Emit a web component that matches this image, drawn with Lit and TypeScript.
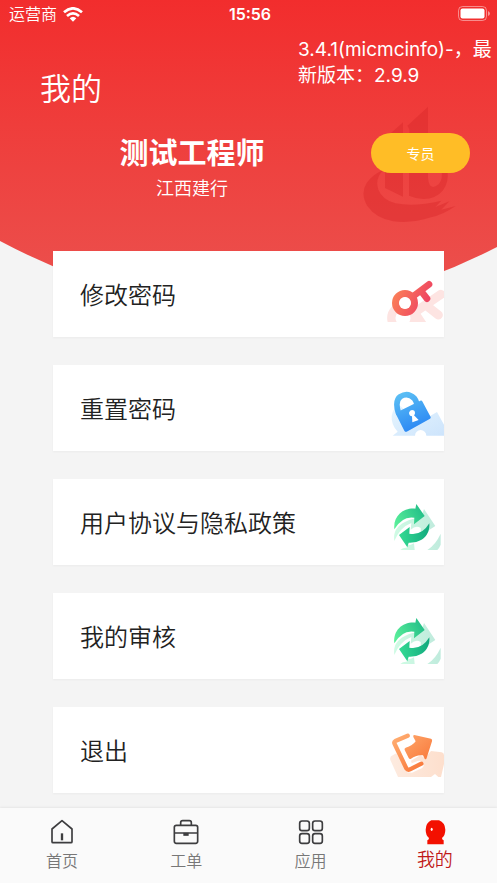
import { LitElement, html, css, svg, type TemplateResult } from "lit";
import { customElement, property, state } from "lit/decorators.js";
import { classMap } from "lit/directives/class-map.js";

const keyIcon = html`<svg viewBox="27 33 180 144" aria-hidden="true">
  <defs>
    <linearGradient id="kr" gradientUnits="userSpaceOnUse" x1="55" y1="85" x2="150" y2="130">
      <stop offset="0" stop-color="#fb8058" /><stop offset="1" stop-color="#ee4462" />
    </linearGradient>
    <clipPath id="kc"><rect x="27" y="33" width="180" height="138" /></clipPath>
  </defs>
  <g clip-path="url(#kc)" fill="none" stroke="#fde4e2">
    <circle cx="84" cy="159" r="35" stroke-width="25" />
    <path d="M128 136L198 88M152 120L190 150" stroke-width="27" stroke-linecap="round" />
    <path d="M122 142L146 178" stroke-width="20" />
  </g>
  <g fill="none" stroke="url(#kr)">
    <circle cx="90" cy="114" r="28" stroke-width="22" />
    <path d="M114 94L162 58M138 78L156 101" stroke-width="20" stroke-linecap="round" stroke-linejoin="round" />
  </g>
  <circle cx="90" cy="114" r="18" fill="#fff" />
</svg>`;

const lockIcon = html`<svg viewBox="27 30 180 144" aria-hidden="true">
  <defs>
    <linearGradient id="l" gradientUnits="userSpaceOnUse" x1="80" y1="35" x2="125" y2="150">
      <stop offset="0" stop-color="#5cc0f4" /><stop offset="1" stop-color="#2b87f4" />
    </linearGradient>
    <linearGradient id="ll" x1="0" y1="0" x2="1" y2="1">
      <stop offset="0" stop-color="#e6f5fe" /><stop offset="1" stop-color="#cde4fc" />
    </linearGradient>
  </defs>
  <path d="M53 167L68 155Q48 134 50 108Q53 84 76 78L130 128L186 96L207 134V167H154A17 17 0 0 0 120 167Z" fill="url(#ll)" />
  <path d="M70 98Q59 62 76 50Q98 36 118 55Q123 61 126 72" fill="none" stroke="url(#l)" stroke-width="17" stroke-linecap="round" />
  <path d="M66 97L136 62Q141 61 143 66L167 111Q168 114 165 116L95 155Q91 157 88 152L63 103Q62 99 66 97Z" fill="url(#l)" />
  <path d="M102 98Q104 90 111 90Q120 90 120 99Q120 103 117 106L131 120L112 127L111 109Q102 107 102 98Z" fill="#fff" />
</svg>`;

const cycleIcon = html`<svg viewBox="27 36 180 144" aria-hidden="true">
  <defs>
    <linearGradient id="c1" gradientUnits="userSpaceOnUse" x1="58" y1="100" x2="148" y2="55">
      <stop offset="0" stop-color="#5cf09b" /><stop offset="1" stop-color="#21bd87" />
    </linearGradient>
    <linearGradient id="c2" gradientUnits="userSpaceOnUse" x1="72" y1="125" x2="163" y2="115">
      <stop offset="0" stop-color="#35da93" /><stop offset="1" stop-color="#12aa7e" />
    </linearGradient>
    <linearGradient id="c3" x1="0" y1="0" x2="1" y2="0">
      <stop offset="0" stop-color="#cffbe4" /><stop offset="1" stop-color="#c0ebdd" />
    </linearGradient>
  </defs>
  <path d="M58 147Q52 108 90 90Q111 78 138 77L147 51L181 102L138 130L137 108Q123 99 107 113L109 93Q76 105 58 147Z" fill="url(#c3)" />
  <path d="M76 174Q84 166 95 167L97 160Q108 160 117 154L119 174ZM197 125V158Q193 168 187 174H157Q182 158 197 125Z" fill="url(#c3)" />
  <path d="M58 112C54 72 84 47 121 50L124 36L149 72L117 97L118 77Q82 71 58 112Z" fill="url(#c1)" />
  <path d="M163 94C166 132 138 154 101 152L97 166L72 129L104 105L103 125Q140 132 163 94Z" fill="url(#c2)" />
</svg>`;

const exitIcon = html`<svg viewBox="27 36 180 144" aria-hidden="true">
  <defs>
    <linearGradient id="e" gradientUnits="userSpaceOnUse" x1="60" y1="45" x2="145" y2="145">
      <stop offset="0" stop-color="#ffae72" /><stop offset="1" stop-color="#f9783a" />
    </linearGradient>
    <linearGradient id="el" x1="0" y1="0" x2="1" y2="0">
      <stop offset="0" stop-color="#fdebe0" /><stop offset="1" stop-color="#fddfcd" />
    </linearGradient>
  </defs>
  <path d="M69 171L46 120Q43 110 53 106L64 100L96 157L111 158L140 145Q150 139 143 128Q139 120 128 123L110 130L108 122L136 106L150 114L168 93L200 97Q207 99 207 105V132L198 171H190L180 162L168 171Z" fill="url(#el)" />
  <path d="M98 47L61 63Q56 66 59 72L94 145Q98 151 105 148L139 131" fill="none" stroke="url(#e)" stroke-width="13" stroke-linecap="round" stroke-linejoin="round" />
  <path d="M118 45L168 56Q173 58 171 64L155 114Q153 120 149 116L144 106Q125 103 108 116Q104 119 101 114L89 90Q87 85 92 83Q113 77 122 64L115 51Q113 45 118 45Z" fill="url(#e)" />
</svg>`;

const homeIcon = svg`<g fill="none" stroke="#3d3d3f" stroke-width="5" stroke-linejoin="round">
  <path d="M9 30L39 5L69 30V68Q69 71 66 71H12Q9 71 9 68Z" /><path d="M39 43V64" stroke-width="7" /></g>`;
const caseIcon = svg`<g fill="none" stroke="#3d3d3f" stroke-width="5" stroke-linejoin="round">
  <rect x="4" y="19" width="70" height="54" rx="6" /><path d="M23 18V11Q23 5 29 5H49Q55 5 55 11V18M4 42H74" />
  <path d="M31 46H47" stroke-width="9" /></g>`;
const gridIcon = svg`<g fill="none" stroke="#3d3d3f" stroke-width="5">
  <rect x="5" y="6" width="29" height="29" rx="7" /><rect x="44" y="6" width="29" height="29" rx="7" />
  <rect x="5" y="44" width="29" height="29" rx="7" /><rect x="44" y="44" width="29" height="29" rx="7" /></g>`;
const meIcon = svg`<path d="M28 4H51Q69 11 70 32Q70 49 60 57Q60 62 65 64V76H16V64Q21 62 21 57Q11 49 11 32Q12 11 28 4Z" fill="#f31000" />
  <ellipse cx="29" cy="31" rx="3" ry="5" fill="#fff" />`;

@customElement("menu-card")
class MenuCard extends LitElement {
  @property() label = "";
  @property({ attribute: false }) icon?: TemplateResult;

  static styles = css`
    :host { display: block; }
    button {
      display: flex; align-items: center; justify-content: space-between;
      width: 100%; height: 86px; margin: 0; padding: 4px 0 0 27px; border: 0;
      background: #fff; box-shadow: 0 1px 2px rgba(0, 0, 0, 0.04);
      font: inherit; font-size: 24px; line-height: 36px; color: #222;
      text-align: left; cursor: pointer;
    }
    svg { display: block; width: 60px; height: 48px; margin-top: 8px; }
  `;

  render() {
    return html`<button type="button"><span>${this.label}</span>${this.icon}</button>`;
  }
}

@customElement("app-root")
class AppRoot extends LitElement {
  @state() private current = "me";

  private items = [
    { label: "修改密码", icon: keyIcon },
    { label: "重置密码", icon: lockIcon },
    { label: "用户协议与隐私政策", icon: cycleIcon },
    { label: "我的审核", icon: cycleIcon },
    { label: "退出", icon: exitIcon },
  ];

  private tabs = [
    { id: "home", label: "首页", icon: homeIcon },
    { id: "work", label: "工单", icon: caseIcon },
    { id: "apps", label: "应用", icon: gridIcon },
    { id: "me", label: "我的", icon: meIcon },
  ];

  static styles = css`
    :host {
      display: flex; flex-direction: column; min-height: 100vh; position: relative;
      background: #f4f4f4; color: #fff;
      font-family: Inter, "Noto Sans CJK SC", sans-serif; font-weight: 350;
    }
    * { box-sizing: border-box; }
    .backdrop { position: absolute; top: 0; left: 0; width: 100%; height: 312px; }
    .emblem { position: absolute; top: 105px; right: 40px; width: 94px; height: 118px; }
    header { position: relative; height: 251px; }
    .status {
      display: grid; grid-template-columns: 1fr auto 1fr; align-items: center;
      height: 28px; padding: 0 6px 0 9px; font-size: 16px; line-height: 24px;
    }
    .carrier { display: flex; align-items: center; gap: 6px; }
    .wifi { width: 20px; height: 15px; }
    .time { font-weight: 600; }
    .battery { width: 33px; height: 16px; justify-self: end; }
    .top { display: flex; justify-content: space-between; padding: 9px 0 0 40px; }
    h1 { margin: 28px 0 0; font-size: 31px; line-height: 48px; font-weight: 350; }
    .version { width: 199px; margin: 0; font-size: 19px; line-height: 26px; font-weight: 400; }
    .profile { display: flex; align-items: flex-start; padding: 20px 27px 0 13px; }
    .identity { flex: 1; padding-top: 1px; text-align: center; }
    h2 { margin: 0; font-size: 29px; line-height: 40px; font-weight: 700; }
    .branch { margin: 0; font-size: 18px; line-height: 29px; }
    .role {
      width: 99px; height: 40px; padding: 0; border: 0; border-radius: 20px;
      background: #ffbd26; color: #fff; font: inherit; font-size: 14px; font-weight: 400;
    }
    main {
      position: relative; flex: 1; display: flex; flex-direction: column; gap: 28px;
      padding: 0 53px 15px;
    }
    nav {
      position: relative; display: grid; grid-template-columns: repeat(4, 1fr); height: 75px;
      background: #fafafa; box-shadow: 0 -1px 2px rgba(0, 0, 0, 0.06);
    }
    nav a {
      display: flex; flex-direction: column; align-items: center; padding-top: 11px; gap: 4px;
      color: #777; font-size: 16px; line-height: 24px; text-decoration: none;
    }
    nav a.active { color: #c01818; font-size: 18px; line-height: 22px; }
    nav svg { width: 26px; height: 26px; }
  `;

  render() {
    return html`
      <svg class="backdrop" viewBox="0 0 497 312" preserveAspectRatio="none" aria-hidden="true">
        <defs>
          <linearGradient id="bg" x1="0" y1="0" x2="0" y2="1">
            <stop offset="0" stop-color="#f22d2d" /><stop offset="0.4" stop-color="#ef3d3b" />
            <stop offset="0.85" stop-color="#ec4d4a" /><stop offset="1" stop-color="#ec4f4c" />
          </linearGradient>
        </defs>
        <path d="M0 0H497V247Q250 374 0 241Z" fill="url(#bg)" />
      </svg>
      <svg class="emblem" viewBox="69 30 282 354" aria-hidden="true">
        <g fill="#d9272b" fill-opacity="0.45">
          <path d="M264 35V250Q268 290 296 268Q310 252 304 225H322Q328 262 308 287Q288 311 250 312Q228 311 207 302V118Q212 106 202 92Z" />
          <path d="M189 82V305L135 279V130Z" />
          <path d="M130 225Q104 250 115 284Q127 314 166 325Q225 336 304 317L286 336L328 319L304 344L347 333Q307 360 273 367Q216 386 160 379Q108 370 82 333Q60 296 80 264Q97 239 130 225Z" />
        </g>
      </svg>
      <header>
        <div class="status">
          <span class="carrier">运营商
            <svg class="wifi" viewBox="0 0 60 45" aria-hidden="true">
              <g fill="none" stroke="#fff" stroke-width="8">
                <path d="M3 16Q30 -8 57 16" /><path d="M12 27Q30 11 48 27" />
              </g>
              <path d="M20 34Q30 25 40 34L30 44Z" fill="#fff" />
            </svg>
          </span>
          <span class="time">15:56</span>
          <svg class="battery" viewBox="0 0 33 16" aria-hidden="true">
            <rect x="0.5" y="0.5" width="28" height="14" rx="4" fill="none" stroke="#fff" stroke-opacity="0.45" />
            <rect x="2.5" y="2.5" width="24" height="10" rx="2" fill="#fff" />
            <path d="M30 5Q32 6 32 7.5Q32 9 30 10Z" fill="#fff" fill-opacity="0.5" />
          </svg>
        </div>
        <div class="top">
          <h1>我的</h1>
          <p class="version">3.4.1(micmcinfo)-，最新版本：2.9.9</p>
        </div>
        <div class="profile">
          <div class="identity">
            <h2>测试工程师</h2>
            <p class="branch">江西建行</p>
          </div>
          <button class="role" type="button">专员</button>
        </div>
      </header>
      <main>
        ${this.items.map((i) => html`<menu-card .label=${i.label} .icon=${i.icon}></menu-card>`)}
      </main>
      <nav>
        ${this.tabs.map(
          (t) => html`<a href="#${t.id}" class=${classMap({ active: t.id === this.current })}
            @click=${() => (this.current = t.id)}>
            <svg viewBox="0 0 78 78" aria-hidden="true">${t.icon}</svg><span>${t.label}</span>
          </a>`
        )}
      </nav>
    `;
  }
}
